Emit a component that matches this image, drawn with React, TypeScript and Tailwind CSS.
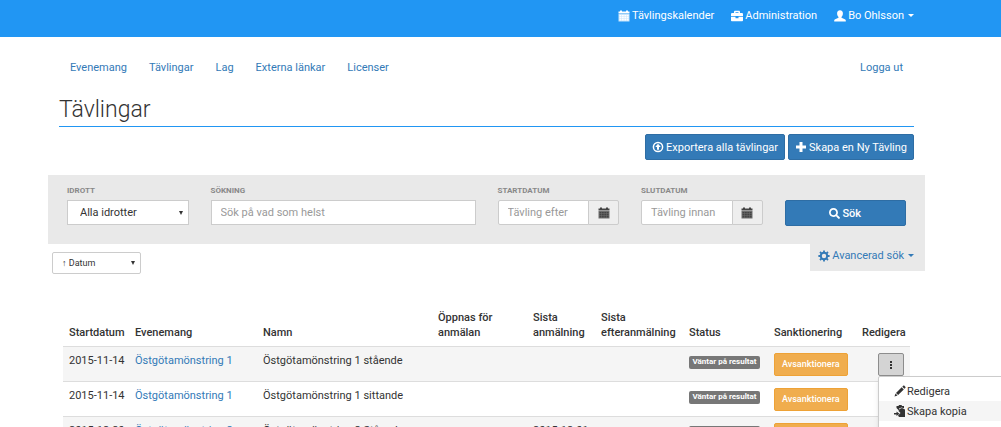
import { useState } from 'react';
import type { ReactNode } from 'react';
import { FaBriefcase, FaSearch } from 'react-icons/fa';

interface Competition {
  id: number;
  date: string;
  event: string;
  name: string;
  lastEntry?: string;
}

const competitions: Competition[] = [
  { id: 1, date: '2015-11-14', event: 'Östgötamönstring 1', name: 'Östgötamönstring 1 stående' },
  { id: 2, date: '2015-11-14', event: 'Östgötamönstring 1', name: 'Östgötamönstring 1 sittande' },
  { id: 3, date: '2015-12-20', event: 'Östgötamönstring 2', name: 'Östgötamönstring 2 Stående', lastEntry: '2015-12-01' },
];

const navLinks = ['Evenemang', 'Tävlingar', 'Lag', 'Externa länkar', 'Licenser'];

const CalendarIcon = () => (
  <svg viewBox="0 0 12 12" className="h-3 w-3 shrink-0" fill="currentColor" aria-hidden="true">
    <path d="M.5 1.500H2V.5h2v1h4v-1h2v1h1.500v2H.5z" />
    <path d="M.5 4h11v7.500H.5z" opacity=".75" />
    <path d="M1.500 5h2v1.400h-2zM4 5h1.800v1.400H4zM6.300 5h1.800v1.400H6.300zM8.600 5h2v1.400h-2zM1.500 7h2v1.400h-2zM4 7h1.800v1.400H4zM6.300 7h1.800v1.400H6.300zM8.600 7h2v1.400h-2zM1.500 9h2v1.400h-2zM4 9h1.800v1.400H4zM6.300 9h1.800v1.400H6.300zM8.600 9h2v1.400h-2z" />
  </svg>
);

const UserIcon = () => (
  <svg viewBox="0 0 12 12" className="mr-0.5 h-3 w-3 shrink-0" fill="currentColor" aria-hidden="true">
    <path d="M6 .3c1.900 0 2.900 1.300 2.900 3.100 0 1.600-.6 2.700-1.400 3.500v.8l3.300 1.500c.7.300 1 .8 1 1.400v.9H.2v-.9c0-.6.3-1.100 1-1.400l3.300-1.500v-.8C3.700 6.100 3.100 5 3.100 3.400 3.100 1.600 4.100.3 6 .3z" />
  </svg>
);

const PlusIcon = () => (
  <svg viewBox="0 0 12 12" className="h-3 w-3 shrink-0" fill="currentColor" aria-hidden="true">
    <path d="M4.500 1h3v3.500H11v3H7.500V11h-3V7.500H1v-3h3.500z" />
  </svg>
);

const PencilIcon = () => (
  <svg viewBox="0 0 12 12" className="h-3 w-3 shrink-0" fill="currentColor" aria-hidden="true">
    <path d="M9.200.8c.4-.4.8-.4 1.200 0l.9.9c.4.4.4.8 0 1.200l-.9.9-2.100-2.100zM7.700 2.300l2.100 2.100-5.700 5.700L2 8zM1.500 8.600l2 2L.5 11.600z" />
  </svg>
);

const UploadIcon = () => (
  <svg viewBox="0 0 12 12" className="h-3 w-3 shrink-0" aria-hidden="true">
    <circle cx="6" cy="6" r="4.600" fill="none" stroke="currentColor" strokeWidth="1.500" />
    <path d="M6 2.800 8.800 6H7v2.800H5V6H3.200z" fill="currentColor" />
  </svg>
);

const CogIcon = () => (
  <svg viewBox="0 0 12 12" className="h-3 w-3 shrink-0" aria-hidden="true">
    <circle cx="6" cy="6" r="3.200" fill="none" stroke="currentColor" strokeWidth="2" />
    <path
      d="M6 .4v2M6 9.600v2M.4 6h2M9.600 6h2M2 2l1.400 1.400M8.600 8.600 10 10M2 10l1.400-1.400M8.600 3.400 10 2"
      stroke="currentColor"
      strokeWidth="1.800"
    />
  </svg>
);

const CopyIcon = () => (
  <svg viewBox="0 0 12 12" className="h-3 w-3 shrink-0" fill="currentColor" aria-hidden="true">
    <path d="M2.500 1h2L5 0h2.500l.5 1h2v2.200L7.500 2.500 5 3.500v2L2.500 3z" />
    <path d="M5.500 4 8 3l3 1.500V12H5L4 10.500 6.500 8 4.500 6z" />
    <path d="M0 8h2.500V6.500L5.500 8.800 2.500 11V9.600H0z" />
  </svg>
);

const Caret = () => (
  <svg viewBox="0 0 6 3" className="ml-1 h-[3px] w-[6px] shrink-0" fill="currentColor" aria-hidden="true">
    <path d="M0 0h6L3 3z" />
  </svg>
);

const SelectArrow = () => (
  <svg
    viewBox="0 0 4 4"
    className="pointer-events-none absolute top-1/2 right-1.5 h-1 w-1 -translate-y-1/2 text-[#333]"
    fill="currentColor"
    aria-hidden="true"
  >
    <path d="M0 0h4L2 4z" />
  </svg>
);

const Field = ({ label, id, children }: { label: string; id: string; children: ReactNode }) => (
  <div>
    <label htmlFor={id} className="block pb-[3px] text-[8px] leading-3 font-bold text-[#888] uppercase">
      {label}
    </label>
    {children}
  </div>
);

const DateField = ({ label, id, placeholder }: { label: string; id: string; placeholder: string }) => (
  <Field label={label} id={id}>
    <div className="flex h-[25px]">
      <input
        id={id}
        type="text"
        placeholder={placeholder}
        className="min-w-0 flex-1 rounded-l-xs border border-[#ccc] bg-white px-[9px] placeholder-[#999]"
      />
      <button
        type="button"
        aria-label={`Välj ${label.toLowerCase()}`}
        className="-ml-px flex w-[31px] items-center justify-center rounded-r-xs border border-[#ccc] bg-[#eee] text-[#444]"
      >
        <CalendarIcon />
      </button>
    </div>
  </Field>
);

const RowMenu = () => (
  <div className="absolute top-full left-0 z-10 w-40 rounded-xs border border-[#ccc] bg-white pt-1 pb-6 text-left shadow-md">
    <a href="#redigera" className="flex h-5 items-center gap-px px-[15px] text-[#333]">
      <PencilIcon />
      Redigera
    </a>
    <a href="#kopia" className="flex h-5 items-center gap-px bg-[#f5f5f5] px-[15px] text-[#333]">
      <CopyIcon />
      Skapa kopia
    </a>
  </div>
);

export default function App() {
  const [openRow, setOpenRow] = useState<number | null>(1);

  return (
    <div className="h-screen overflow-hidden bg-white font-[Roboto,sans-serif] text-[11px] leading-[15px] text-[#333]">
      <header className="flex h-[37px] justify-end gap-[17px] bg-[#2196f3] pt-2 pr-[87px] text-white">
        <a href="#kalender" className="flex h-[15px] items-center gap-0.5">
          <CalendarIcon />
          Tävlingskalender
        </a>
        <a href="#admin" className="flex h-[15px] items-center gap-0.5">
          <FaBriefcase className="h-3 w-3" />
          Administration
        </a>
        <button type="button" className="flex h-[15px] items-center">
          <UserIcon />
          Bo Ohlsson
          <Caret />
        </button>
      </header>

      <main className="mr-[76px] ml-12">
        <div className="px-[11px]">
          <nav className="flex gap-[22px] px-[11px] pt-[23px] text-[#337ab7]">
            {navLinks.map((link) => (
              <a key={link} href={`#${link}`}>
                {link}
              </a>
            ))}
            <a href="#logout" className="ml-auto">
              Logga ut
            </a>
          </nav>

          <h1 className="mt-[21px] border-b border-b-[#2196f3] pb-0.5 text-[23px] leading-7 font-light">Tävlingar</h1>

          <div className="flex justify-end gap-[3px] pt-[7px]">
            <button
              type="button"
              className="flex h-[26px] items-center gap-0.5 rounded-xs border border-[#2e6da4] bg-[#337ab7] px-1.5 text-white"
            >
              <UploadIcon />
              Exportera alla tävlingar
            </button>
            <button
              type="button"
              className="flex h-[26px] items-center gap-0.5 rounded-xs border border-[#2e6da4] bg-[#337ab7] px-1.5 text-white"
            >
              <PlusIcon />
              Skapa en Ny Tävling
            </button>
          </div>
        </div>

        <form
          onSubmit={(e) => e.preventDefault()}
          className="mt-[15px] grid grid-cols-6 items-start gap-[22px] bg-[#e9e9e9] px-[19px] pt-[10px] pb-[18px]"
        >
          <Field label="Idrott" id="sport">
            <div className="relative h-[25px]">
              <select id="sport" className="h-full w-full appearance-none rounded-none border border-[#ccc] bg-white px-3">
                <option>Alla idrotter</option>
              </select>
              <SelectArrow />
            </div>
          </Field>
          <div className="col-span-2">
            <Field label="Sökning" id="search">
              <input
                id="search"
                type="text"
                placeholder="Sök på vad som helst"
                className="block h-[25px] w-full border border-[#ccc] bg-white px-[9px] placeholder-[#999]"
              />
            </Field>
          </div>
          <DateField label="Startdatum" id="start" placeholder="Tävling efter" />
          <DateField label="Slutdatum" id="end" placeholder="Tävling innan" />
          <div className="pt-[15px]">
            <button
              type="submit"
              className="flex h-[26px] w-full items-center justify-center gap-0.5 rounded-xs border border-[#2e6da4] bg-[#337ab7] font-medium text-white"
            >
              <FaSearch className="h-[11px] w-[11px]" />
              Sök
            </button>
          </div>
        </form>

        <div className="flex items-start justify-between pl-1">
          <div className="relative mt-2 h-[22px] w-[89px]">
            <select
              aria-label="Sortering"
              className="h-full w-full appearance-none rounded-xs border border-[#ccc] bg-white px-[9px] text-[9px]"
            >
              <option>↑ Datum</option>
            </select>
            <SelectArrow />
          </div>
          <button type="button" className="flex h-[27px] items-center bg-[#e9e9e9] pr-[11px] pb-1 pl-2 text-[#337ab7]">
            <CogIcon />
            <span className="ml-0.5">Avancerad sök</span>
            <Caret />
          </button>
        </div>

        <div className="px-[15px] pt-8">
          <table className="w-full table-fixed border-collapse text-left">
            <colgroup>
              <col className="w-[66px]" />
              <col className="w-[128px]" />
              <col className="w-[175px]" />
              <col className="w-[95px]" />
              <col className="w-[68px]" />
              <col className="w-[88px]" />
              <col className="w-[85px]" />
              <col className="w-[88px]" />
              <col className="w-[54px]" />
            </colgroup>
            <thead>
              <tr className="align-bottom [&>th]:px-1.5 [&>th]:pt-1 [&>th]:pb-1.5 [&>th]:font-medium">
                <th>Startdatum</th>
                <th>Evenemang</th>
                <th>Namn</th>
                <th>
                  Öppnas för
                  <br />
                  anmälan
                </th>
                <th>
                  Sista
                  <br />
                  anmälning
                </th>
                <th>
                  Sista
                  <br />
                  efteranmälning
                </th>
                <th>Status</th>
                <th>Sanktionering</th>
                <th>Redigera</th>
              </tr>
            </thead>
            <tbody>
              {competitions.map((row) => (
                <tr
                  key={row.id}
                  className="h-[35px] border-t border-[#ddd] align-top whitespace-nowrap odd:bg-[#f5f5f5] [&>td]:px-1.5 [&>td]:pt-1.5"
                >
                  <td>{row.date}</td>
                  <td>
                    <a href={`#event-${row.id}`} className="text-[#337ab7]">
                      {row.event}
                    </a>
                  </td>
                  <td>{row.name}</td>
                  <td />
                  <td>{row.lastEntry}</td>
                  <td />
                  <td>
                    <span className="mt-[3px] block h-[13px] w-[71px] rounded-xs bg-[#777] text-center text-[8px] leading-3 font-bold text-white">
                      Väntar på resultat
                    </span>
                  </td>
                  <td>
                    <button
                      type="button"
                      className="block h-[23px] rounded-xs border border-[#eea236] bg-[#f0ad4e] px-[7px] text-[9px] font-medium text-white"
                    >
                      Avsanktionera
                    </button>
                  </td>
                  <td>
                    <div className="relative ml-auto w-[26px]">
                      <button
                        type="button"
                        aria-label="Fler val"
                        onClick={() => setOpenRow(openRow === row.id ? null : row.id)}
                        className="flex h-[23px] w-[26px] items-center justify-center rounded-xs border border-[#8c8c8c] bg-[#d4d4d4]"
                      >
                        <svg viewBox="0 0 2 8" className="h-2 w-0.5" fill="currentColor" aria-hidden="true">
                          <path d="M0 0h2v2H0zM0 3h2v2H0zM0 6h2v2H0z" />
                        </svg>
                      </button>
                      {openRow === row.id && <RowMenu />}
                    </div>
                  </td>
                </tr>
              ))}
            </tbody>
          </table>
        </div>
      </main>
    </div>
  );
}
